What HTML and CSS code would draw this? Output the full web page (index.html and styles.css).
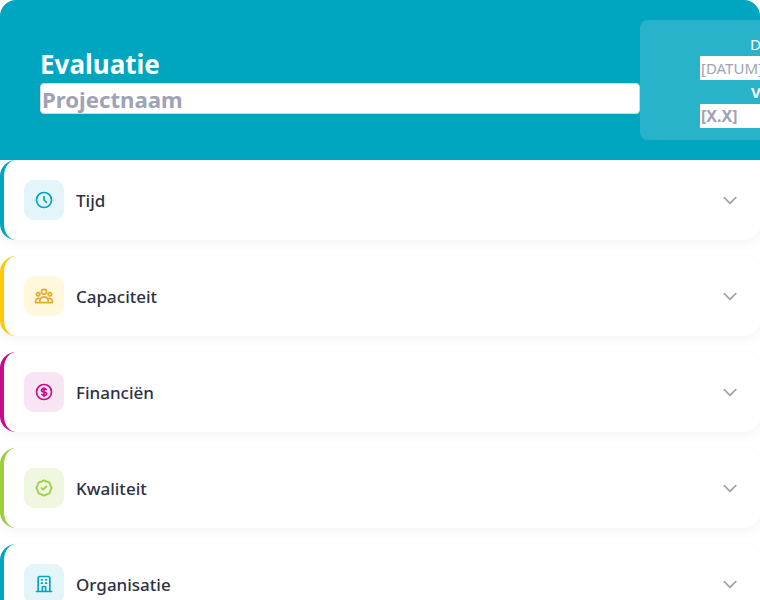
FILE: index.html
```html
<!DOCTYPE html>
<html lang="nl">
<head>
    <meta charset="UTF-8">
    <meta name="viewport" content="width=device-width, initial-scale=1.0">
    <title>Evaluatie</title>
    <link rel="stylesheet" href="styles.css">
</head>
<body>
    <div class="container">
        <header class="header">
            <div class="header-main">
                <h1>Evaluatie</h1>
                <input class="project-input" type="text" placeholder="Projectnaam">
            </div>
            <div class="meta">
                <div class="meta-label">Datum</div>
                <input class="meta-input" type="text" placeholder="[DATUM]">
                <div class="meta-label meta-bold">Versie</div>
                <input class="meta-input meta-input-bold" type="text" placeholder="[X.X]">
            </div>
        </header>

        <div class="sections">
            <div class="section section-tijd">
                <div class="icon">
                    <svg viewBox="0 0 24 24"><path d="M12 8v4l3 3m6-3a9 9 0 11-18 0 9 9 0 0118 0z"/></svg>
                </div>
                <span class="section-title">Tijd</span>
                <svg class="chevron" viewBox="0 0 24 24"><path d="M19 9l-7 7-7-7"/></svg>
            </div>
            <div class="section section-capaciteit">
                <div class="icon">
                    <svg viewBox="0 0 24 24"><path d="M17 20h5v-2a3 3 0 00-5.356-1.857M17 20H7m10 0v-2c0-.656-.126-1.283-.356-1.857M7 20H2v-2a3 3 0 015.356-1.857M7 20v-2c0-.656.126-1.283.356-1.857m0 0a5.002 5.002 0 019.288 0M15 7a3 3 0 11-6 0 3 3 0 016 0zm6 3a2 2 0 11-4 0 2 2 0 014 0zM7 10a2 2 0 11-4 0 2 2 0 014 0z"/></svg>
                </div>
                <span class="section-title">Capaciteit</span>
                <svg class="chevron" viewBox="0 0 24 24"><path d="M19 9l-7 7-7-7"/></svg>
            </div>
            <div class="section section-financien">
                <div class="icon">
                    <svg viewBox="0 0 24 24"><path d="M12 8c-1.657 0-3 .895-3 2s1.343 2 3 2 3 .895 3 2-1.343 2-3 2m0-8c1.11 0 2.08.402 2.599 1M12 8V7m0 1v8m0 0v1m0-1c-1.11 0-2.08-.402-2.599-1M21 12a9 9 0 11-18 0 9 9 0 0118 0z"/></svg>
                </div>
                <span class="section-title">Financiën</span>
                <svg class="chevron" viewBox="0 0 24 24"><path d="M19 9l-7 7-7-7"/></svg>
            </div>
            <div class="section section-kwaliteit">
                <div class="icon">
                    <svg viewBox="0 0 24 24"><path d="M9 12l2 2 4-4M7.835 4.697a3.42 3.42 0 001.946-.806 3.42 3.42 0 014.438 0 3.42 3.42 0 001.946.806 3.42 3.42 0 013.138 3.138 3.42 3.42 0 00.806 1.946 3.42 3.42 0 010 4.438 3.42 3.42 0 00-.806 1.946 3.42 3.42 0 01-3.138 3.138 3.42 3.42 0 00-1.946.806 3.42 3.42 0 01-4.438 0 3.42 3.42 0 00-1.946-.806 3.42 3.42 0 01-3.138-3.138 3.42 3.42 0 00-.806-1.946 3.42 3.42 0 010-4.438 3.42 3.42 0 00.806-1.946 3.42 3.42 0 013.138-3.138z"/></svg>
                </div>
                <span class="section-title">Kwaliteit</span>
                <svg class="chevron" viewBox="0 0 24 24"><path d="M19 9l-7 7-7-7"/></svg>
            </div>
            <div class="section section-organisatie">
                <div class="icon">
                    <svg viewBox="0 0 24 24"><path d="M19 21V5a2 2 0 00-2-2H7a2 2 0 00-2 2v16m14 0h2m-2 0h-5m-9 0H3m2 0h5M9 7h1m-1 4h1m4-4h1m-1 4h1m-5 10v-5a1 1 0 011-1h2a1 1 0 011 1v5m-4 0h4"/></svg>
                </div>
                <span class="section-title">Organisatie</span>
                <svg class="chevron" viewBox="0 0 24 24"><path d="M19 9l-7 7-7-7"/></svg>
            </div>
        </div>
    </div>
</body>
</html>
```

FILE: styles.css
```css
* {
    box-sizing: border-box;
    padding: 0;
    margin: 0;
}

body {
    font-family: "Noto Sans", "Open Sans", sans-serif;
    background-color: white;
    color: #2d3142;
}

.container {
    width: 760px;
    height: 600px;
    overflow: hidden;
}

.header {
    display: flex;
    align-items: center;
    height: 160px;
    padding-left: 40px;
    background-color: #00a5c0;
    border-radius: 16px 16px 0 0;
}

.header-main {
    flex: none;
    width: 600px;
}

.header-main h1 {
    font-size: 26px;
    line-height: 37px;
    font-weight: 700;
    color: white;
}

.project-input {
    display: block;
    width: 100%;
    height: 31px;
    padding: 2px 0 0 1px;
    font-family: inherit;
    font-size: 22.2px;
    font-weight: 700;
    border: 1px solid #d5d8e0;
    border-radius: 4px;
    background-color: white;
}

.project-input::placeholder,
.meta-input::placeholder {
    color: #a0a3b5;
    opacity: 1;
}

.meta {
    flex: none;
    width: 268px;
    padding: 12px 60px;
    background-color: rgba(255, 255, 255, 0.16);
    border-radius: 8px;
    text-align: center;
    color: white;
}

.meta-label {
    font-size: 15px;
    line-height: 24px;
}

.meta-bold {
    font-weight: 700;
}

.meta-input {
    display: block;
    width: 100%;
    height: 24px;
    padding: 0 1px;
    font-family: inherit;
    font-size: 15px;
    border: none;
    background-color: white;
}

.meta-input-bold {
    font-size: 16px;
    font-weight: 700;
}

.sections {
    display: flex;
    flex-direction: column;
    gap: 16px;
}

.section {
    flex: none;
    display: flex;
    align-items: center;
    gap: 12px;
    height: 80px;
    padding: 0 20px;
    background-color: white;
    border-left: 4px solid #00a5c0;
    border-radius: 16px;
    box-shadow: 0 4px 12px rgba(0, 0, 0, 0.04);
}

.icon {
    display: flex;
    justify-content: center;
    align-items: center;
    flex: none;
    width: 40px;
    height: 40px;
    border-radius: 10px;
}

.icon svg {
    width: 20px;
    height: 20px;
    fill: none;
    stroke: currentColor;
    stroke-width: 2;
    stroke-linecap: round;
    stroke-linejoin: round;
}

.section-title {
    flex: 1;
    font-size: 17px;
    line-height: 24px;
    padding-top: 1px;
    font-weight: 500;
}

.chevron {
    flex: none;
    width: 20px;
    height: 20px;
    fill: none;
    stroke: #9a9db0;
    stroke-width: 2;
    stroke-linecap: round;
    stroke-linejoin: round;
}

.section-tijd .icon,
.section-organisatie .icon {
    color: #00a5c0;
    background-color: #e3f5f9;
}

.section-capaciteit {
    border-left-color: #ffc907;
}

.section-capaciteit .icon {
    color: #e8a92f;
    background-color: #fff8dc;
}

.section-financien {
    border-left-color: #c90a8b;
}

.section-financien .icon {
    color: #c90a8b;
    background-color: #f8e5f3;
}

.section-kwaliteit {
    border-left-color: #9ccf38;
}

.section-kwaliteit .icon {
    color: #9ccf38;
    background-color: #eff7e0;
}
```
